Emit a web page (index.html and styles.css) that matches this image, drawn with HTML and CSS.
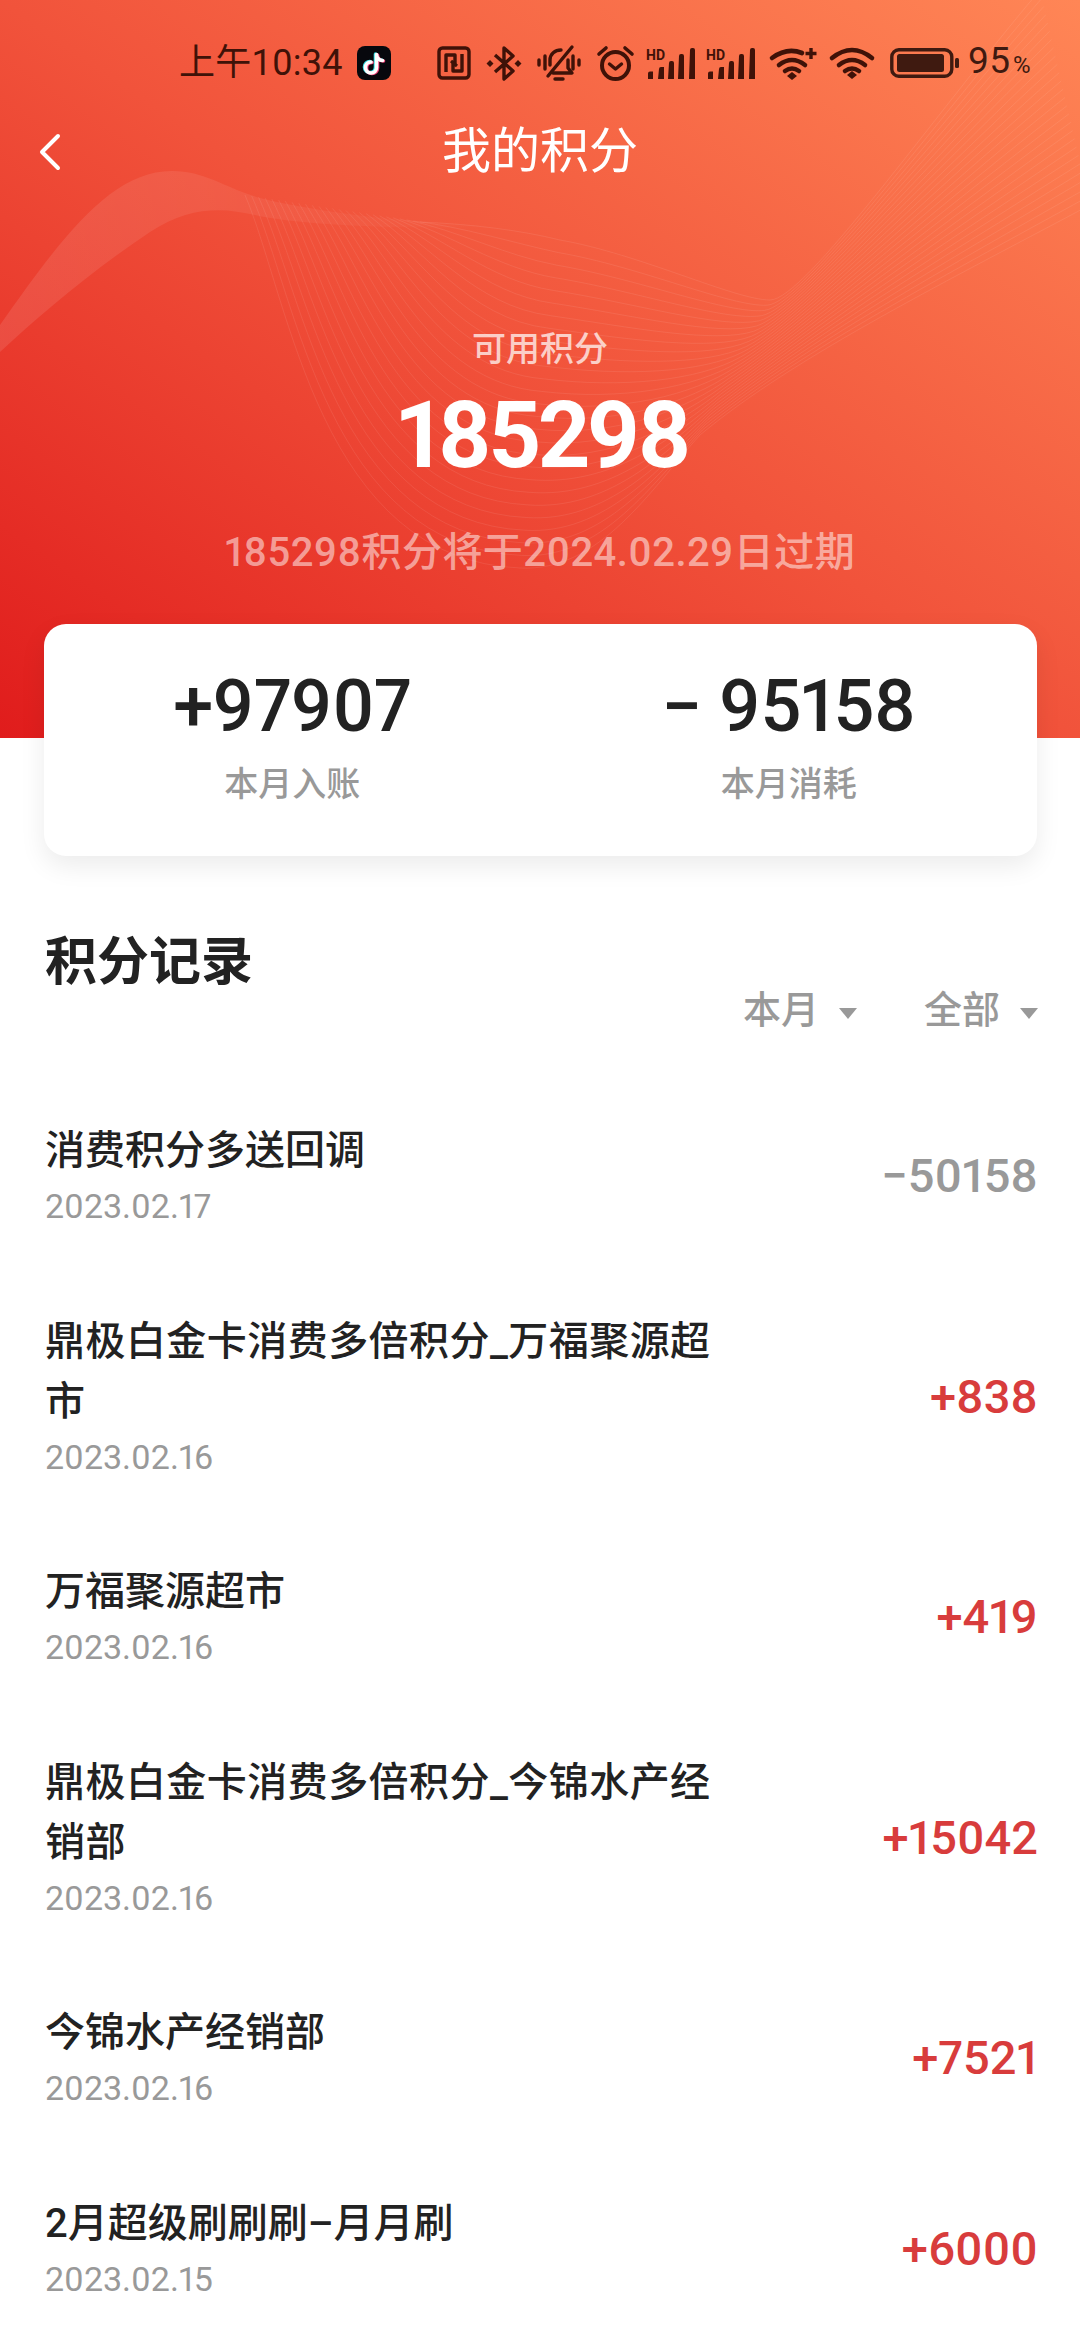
FILE: index.html
```html
<!DOCTYPE html>
<html lang="zh-CN">
<head>
<meta charset="utf-8">
<title>我的积分</title>
<link rel="stylesheet" href="styles.css">
</head>
<body>
<div class="page">
  <header class="hero">
    <svg class="wave" id="wave" viewBox="0 0 1080 738" aria-hidden="true">
      <defs>
        <linearGradient id="band" x1="0" y1="0" x2="1" y2="0">
          <stop offset="0" stop-color="#fff" stop-opacity=".1"/>
          <stop offset=".4" stop-color="#fff" stop-opacity=".075"/>
          <stop offset="1" stop-color="#fff" stop-opacity="0"/>
        </linearGradient>
      </defs>
      <path fill="url(#band)" d="M0 325C60 240 110 171 172 171C205 171 225 188 260 198C300 208 380 222 500 226C400 230 300 225 255 215C225 208 190 205 150 232C90 272 40 315 0 352Z"/>
      <g id="waveLines" fill="none" stroke="#fff" stroke-width="1"></g>
    </svg>

    <div class="status">
      <span class="time">上午10:34</span>
      <svg class="ico tiktok" viewBox="0 0 34 34">
        <rect width="34" height="34" rx="8" fill="#07080d"/>
        <g fill="none" stroke-width="3.6" stroke-linecap="round">
          <path stroke="#39e0e6" d="M18.500 8V21a5.500 5.500 0 1 1-5.500-5.500M18.500 8c0 3.500 3 6 6 6"/>
          <path stroke="#f5447a" d="M20.500 9V22a5.500 5.500 0 1 1-5.500-5.500M20.500 9c0 3.500 3 6 6 6"/>
          <path stroke="#fff" d="M19.500 8.500V21.500a5.500 5.500 0 1 1-5.500-5.500M19.500 8.500c0 3.500 3 6 6 6"/>
        </g>
      </svg>
      <svg class="ico nfc" viewBox="0 0 34 34">
        <g fill="none" stroke="#3f1208" stroke-width="3.400" stroke-linejoin="round">
          <rect x="2" y="2" width="30" height="30" rx="3.500"/>
          <path d="M9 26V9H18V18L14 15"/>
          <path d="M25 8V25H16V17L20 20"/>
        </g>
      </svg>
      <svg class="ico bt" viewBox="0 0 36 37">
        <path fill="none" stroke="#3f1208" stroke-width="3.400" stroke-linejoin="round" d="M9 10L27 26L18 34V3L27 11L9 27"/>
        <path fill="#3f1208" d="M4 15l3.500 3.500L4 22 .5 18.500zM32 15l3.500 3.500L32 22l-3.500-3.500z"/>
      </svg>
      <svg class="ico bell" viewBox="0 0 44 37">
        <g fill="none" stroke="#3f1208" stroke-width="3.400" stroke-linecap="round" stroke-linejoin="round">
          <path d="M2 15v5M8 11v13M36 11v13M42 15v5"/>
          <path d="M13 20V15C13 9 18 5 24 5M31 15V23L35 28H16"/>
          <path d="M35 2L11 31"/>
          <path d="M18 34h8"/>
        </g>
      </svg>
      <svg class="ico alarm" viewBox="0 0 39 36">
        <g fill="none" stroke="#3f1208" stroke-linecap="round" stroke-linejoin="round">
          <circle cx="19.500" cy="20.500" r="13.500" stroke-width="4"/>
          <path stroke-width="3.600" d="M3 9l7-6M29 3l7 6"/>
          <path stroke-width="3.400" d="M13.500 19l6 5 6-5"/>
        </g>
      </svg>
      <svg class="ico signal" viewBox="0 0 50 32">
        <text class="hd" x="0" y="13">HD</text>
        <path fill="#3f1208" d="M2 26.500a2 2 0 0 1 2-2h3v7.500H2zM13 22a2 2 0 0 1 2-2h3v12h-6zM23 16a2 2 0 0 1 2-2h1a2 2 0 0 1 2 2v16h-6zM33 9a2 2 0 0 1 2-2h1a2 2 0 0 1 2 2v23h-6zM44 3a2 2 0 0 1 2-2h1a2 2 0 0 1 2 2v29h-6z"/>
      </svg>
      <svg class="ico signal two" viewBox="0 0 50 32">
        <text class="hd" x="0" y="13">HD</text>
        <path fill="#3f1208" d="M2 26.500a2 2 0 0 1 2-2h3v7.500H2zM13 22a2 2 0 0 1 2-2h3v12h-6zM23 16a2 2 0 0 1 2-2h1a2 2 0 0 1 2 2v16h-6zM33 9a2 2 0 0 1 2-2h1a2 2 0 0 1 2 2v23h-6zM44 3a2 2 0 0 1 2-2h1a2 2 0 0 1 2 2v29h-6z"/>
      </svg>
      <svg class="ico wifiplus" viewBox="0 0 49 34">
        <g fill="none" stroke="#3f1208" stroke-width="4.600" stroke-linecap="round">
          <path d="M3 12Q18 1 33 7"/>
          <path d="M10 19Q23 9 36 19"/>
          <path d="M16 25Q23 20 30 25"/>
          <path stroke-width="3.400" d="M42 2v11M36.500 7.500h11" stroke-linecap="butt"/>
        </g>
        <path fill="#3f1208" d="M23 26l5 4-5 4-5-4z"/>
      </svg>
      <svg class="ico wifi" viewBox="0 0 46 32">
        <g fill="none" stroke="#3f1208" stroke-width="4.600" stroke-linecap="round">
          <path d="M3 11Q23-5 43 11"/>
          <path d="M10 18Q23 8 36 18"/>
          <path d="M16 24Q23 19 30 24"/>
        </g>
        <path fill="#3f1208" d="M23 24l5 4-5 4-5-4z"/>
      </svg>
      <svg class="ico battery" viewBox="0 0 69 30">
        <rect x="1.800" y="1.800" width="60" height="26.400" rx="7" fill="none" stroke="#3f1a10" stroke-width="3.400"/>
        <rect x="7" y="6" width="47" height="18" rx="2.500" fill="#3f1a10"/>
        <rect x="65" y="10" width="4" height="10" rx="1.500" fill="#3f1a10"/>
      </svg>
      <span class="pct">95<small>%</small></span>
    </div>

    <nav class="nav">
      <svg class="back" viewBox="0 0 24 38">
        <path fill="none" stroke="#fff" stroke-width="4" stroke-linecap="round" stroke-linejoin="round" d="M20 3L4 19l16 16"/>
      </svg>
      <h1 class="nav-title">我的积分</h1>
    </nav>

    <p class="avail-label">可用积分</p>
    <p class="avail-num">185298</p>
    <p class="expire">185298积分将于2024.02.29日过期</p>
  </header>

  <section class="card">
    <div class="stat">
      <div class="stat-num">+97907</div>
      <div class="stat-label">本月入账</div>
    </div>
    <div class="stat">
      <div class="stat-num">− 95158</div>
      <div class="stat-label">本月消耗</div>
    </div>
  </section>

  <h2 class="section-title">积分记录</h2>
  <div class="filters">
    <span class="filter">本月<i class="caret"></i></span>
    <span class="filter">全部<i class="caret"></i></span>
  </div>

  <ul class="list">
    <li class="row">
      <div class="row-main"><div class="row-title">消费积分多送回调</div><div class="row-date">2023.02.17</div></div>
      <div class="row-val neg">−50158</div>
    </li>
    <li class="row">
      <div class="row-main"><div class="row-title wide">鼎极白金卡消费多倍积分_万福聚源超市</div><div class="row-date">2023.02.16</div></div>
      <div class="row-val">+838</div>
    </li>
    <li class="row">
      <div class="row-main"><div class="row-title">万福聚源超市</div><div class="row-date">2023.02.16</div></div>
      <div class="row-val">+419</div>
    </li>
    <li class="row">
      <div class="row-main"><div class="row-title wide">鼎极白金卡消费多倍积分_今锦水产经销部</div><div class="row-date">2023.02.16</div></div>
      <div class="row-val">+15042</div>
    </li>
    <li class="row">
      <div class="row-main"><div class="row-title">今锦水产经销部</div><div class="row-date">2023.02.16</div></div>
      <div class="row-val">+7521</div>
    </li>
    <li class="row">
      <div class="row-main"><div class="row-title">2月超级刷刷刷–月月刷</div><div class="row-date">2023.02.15</div></div>
      <div class="row-val">+6000</div>
    </li>
  </ul>
</div>
<script src="wave.js"></script>
</body>
</html>
```
FILE: styles.css
```css
* { box-sizing: border-box; }
html, body { margin: 0; padding: 0; background: #fff; }
body { font-family: Roboto, "Noto Sans CJK SC", sans-serif; color: #222; font-variant-numeric: proportional-nums; }
p, h1, h2, ul { margin: 0; padding: 0; font-weight: 400; }
ul { list-style: none; }

.page { width: 1080px; height: 2340px; overflow: hidden; }

.hero {
  position: relative;
  height: 738px;
  padding-top: 44px;
  background: linear-gradient(to top right, #e01c1c 0%, #f1533b 50%, #ff8656 100%);
  color: #fff;
  text-align: center;
}
.wave { position: absolute; left: 0; top: 0; width: 1080px; height: 738px; }

.status {
  position: relative;
  display: flex;
  align-items: center;
  height: 38px;
  padding-left: 179px;
  color: #3f1208;
}
.time { width: 166px; font-size: 36px; line-height: 38px; letter-spacing: .3px; font-variant-numeric: tabular-nums; white-space: nowrap; text-align: left; }
.ico { display: block; flex: none; overflow: visible; }
.tiktok { width: 34px; height: 34px; margin-left: 12px; }
.nfc { width: 34px; height: 34px; margin-left: 46px; }
.bt { width: 36px; height: 37px; margin-left: 15px; }
.bell { width: 44px; height: 37px; margin-left: 15px; }
.alarm { width: 39px; height: 36px; margin-left: 15px; }
.signal { width: 50px; height: 32px; margin-left: 11px; }
.signal.two { margin-left: 10px; }
.hd { font: 700 14px Roboto, sans-serif; fill: #3f1208; }
.wifiplus { width: 49px; height: 34px; margin-left: 13px; }
.wifi { width: 46px; height: 32px; margin-left: 11px; }
.battery { width: 69px; height: 30px; margin-left: 15px; }
.pct { margin-left: 9px; font-size: 37px; line-height: 38px; color: #3f1a10; white-space: nowrap; }
.pct small { font-size: 24px; margin-left: 3px; }

.nav {
  position: relative;
  height: 70px;
  margin-top: 35px;
  display: grid;
  grid-template-columns: 1fr auto 1fr;
  align-items: center;
}
.back { width: 24px; height: 38px; margin-left: 38px; }
.nav-title { grid-column: 2; font-size: 49px; line-height: 70px; font-weight: 400; }

.avail-label { position: relative; margin-top: 137px; font-size: 34px; line-height: 50px; font-weight: 500; color: rgba(255,255,255,.72); }
.avail-num { position: relative; margin-top: 12px; padding-left: 5px; font-size: 92px; line-height: 100px; font-weight: 700; letter-spacing: -3.5px; }
.expire { position: relative; margin-top: 37px; font-size: 40px; line-height: 60px; font-weight: 500; letter-spacing: .45px; color: rgba(255,255,255,.52); }

.card {
  position: relative;
  display: grid;
  grid-template-columns: 1fr 1fr;
  width: 993px;
  height: 232px;
  margin: -114px 0 0 44px;
  padding-top: 43px;
  background: #fff;
  border-radius: 22px;
  box-shadow: 0 10px 26px rgba(0,0,0,.08);
  text-align: center;
}
.stat-num { font-size: 72px; line-height: 80px; font-weight: 500; letter-spacing: -.5px; color: #222; }
.stat-label { margin-top: 14px; font-size: 34px; line-height: 46px; font-weight: 500; color: #999; }

.section-title { margin: 77px 0 0 45px; font-size: 52px; line-height: 60px; font-weight: 700; color: #222; }

.filters { display: flex; justify-content: flex-end; gap: 67px; height: 50px; margin-top: -8px; padding-right: 42px; }
.filter { display: flex; align-items: center; font-size: 38px; line-height: 50px; font-weight: 500; color: #999; }
.caret {
  width: 0; height: 0; margin: 6px 0 0 20px;
  border-left: 9px solid transparent;
  border-right: 9px solid transparent;
  border-top: 11px solid #999;
}

.list { display: flex; flex-direction: column; gap: 80.6px; margin-top: 86px; padding: 0 42px 0 45px; }
.row { display: flex; justify-content: space-between; align-items: center; }
.row-main { width: 680px; }
.row-title { font-size: 40px; line-height: 60px; font-weight: 500; color: #222; }
.row-title.wide { letter-spacing: .45px; }
.row-date { font-size: 34px; line-height: 50px; color: #999; }
.row-val { font-size: 47px; line-height: 60px; font-weight: 500; color: #d83c3c; white-space: nowrap; }
.row-val.neg { color: #999; }
```
FILE: wave.js
```js
// Fan of thin lines for the header decoration: each line interpolates between two guide curves.
(function () {
  var L = [[245,195],[290,300],[320,560],[520,568],[600,572],[650,490],[700,435],[790,360],[930,290],[1090,205]];
  var U = [[420,222],[470,224],[520,230],[560,240],[640,254],[735,300],[770,300],[805,300],[930,120],[1040,-10]];
  var g = document.getElementById('waveLines');
  var n = 26;
  for (var i = 0; i <= n; i++) {
    var k = i / n, d = '';
    for (var p = 0; p < L.length; p++) {
      var x = (L[p][0] + (U[p][0] - L[p][0]) * k).toFixed(1);
      var y = (L[p][1] + (U[p][1] - L[p][1]) * k).toFixed(1);
      d += (p === 0 ? 'M' : p === 1 ? 'C' : ' ') + x + ' ' + y + ' ';
    }
    var path = document.createElementNS('http://www.w3.org/2000/svg', 'path');
    path.setAttribute('d', d);
    path.setAttribute('stroke-opacity', '0.08');
    g.appendChild(path);
  }
})();
```
